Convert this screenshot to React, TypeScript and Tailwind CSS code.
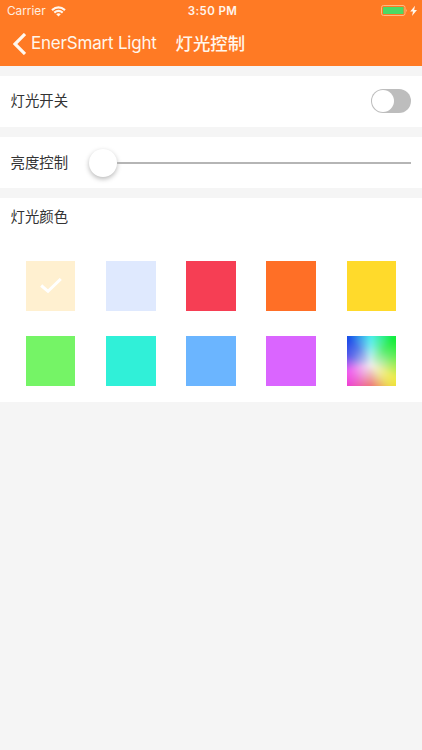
const swatches = [
  ["bg-[#fff0d0]", "bg-[#dfe9fe]", "bg-[#f63e54]", "bg-[#ff6f26]", "bg-[#ffda2b]"],
  ["bg-[#75f466]", "bg-[#30f0d8]", "bg-[#6bb5ff]", "bg-[#da65ff]", "spectrum"],
];

const latin = "font-['Inter','Liberation_Sans',sans-serif]";

function StatusBar() {
  return (
    <div className={`flex h-[22px] items-center text-white ${latin}`}>
      <div className="flex flex-1 items-center pl-[7px]">
        <span className="w-[39px] whitespace-nowrap text-[11.8px] leading-[22px] text-[#ffeee0]">Carrier</span>
        <svg className="ml-[5px]" width="15" height="11" viewBox="0 0 15 11" fill="none" stroke="#fff6ec" strokeWidth="2.2">
          <path d="M1 4.1Q7.5-1.5 14 4.1" />
          <path d="M3.3 6.7Q7.5 3.2 11.7 6.7" />
          <path d="M7.5 10.6L5.2 8.2Q7.5 6.5 9.8 8.2Z" fill="#fff6ec" stroke="none" />
        </svg>
      </div>
      <span className="text-[11.5px] font-semibold leading-[22px] tracking-[0.4px] text-[#fff5ec]">3:50 PM</span>
      <div className="flex flex-1 justify-end pr-[4px]">
        <svg width="37" height="12" viewBox="0 0 37 12">
          <rect x="0.5" y="0.5" width="23.5" height="10" rx="2" fill="none" stroke="#ffba80" />
          <rect x="2" y="2" width="20.5" height="7" rx="0.5" fill="#4cd964" />
          <path d="M25.2 4Q26.8 5.5 25.2 7.2Z" fill="#ffba80" />
          <path d="M34 0.8L29.2 6.4H32L31 11L36 5H33.2Z" fill="#fff6ec" />
        </svg>
      </div>
    </div>
  );
}

function Spectrum() {
  return (
    <div className="h-[49.6px] w-[49.6px] overflow-hidden">
      <div className="-m-[6px] h-[62px] w-[62px] bg-[radial-gradient(circle_at_48%_56%,#eeeeee_0%,rgba(238,238,238,0.7)_18%,rgba(238,238,238,0.3)_42%,rgba(238,238,238,0)_72%),conic-gradient(from_0deg_at_48%_56%,#35efef_0deg,#10ed35_42deg,#35ed35_65deg,#f0ec30_118deg,#edda35_138deg,#ef4b4b_180deg,#ee35ce_227deg,#f235f2_255deg,#2835e8_294deg,#184ae8_320deg,#35efef_360deg)] blur-[2px]" />
    </div>
  );
}

export default function App() {
  return (
    <main className="h-[750px] w-[422px] overflow-hidden bg-[#f5f5f5] font-['Noto_Sans_CJK_SC',sans-serif] text-[#333333]">
      <header className="h-[65.5px] bg-[#ff7a24]">
        <StatusBar />
        <div className="flex h-[43px] items-center pl-[13px] text-[#fff6ec]">
          <svg className="shrink-0" width="13" height="22" viewBox="0 0 13 22" fill="none" stroke="#fff8ef" strokeWidth="3.2">
            <path d="M12 1L2 11L12 21" />
          </svg>
          <span className={`ml-[5px] w-[144.5px] whitespace-nowrap text-[17px] tracking-[-0.2px] ${latin}`}>EnerSmart Light</span>
          <h1 className="mb-[2px] text-[17.4px] font-medium leading-[26px]">灯光控制</h1>
        </div>
      </header>

      <section className="mt-[10px] flex h-[51px] items-center justify-between bg-white px-[11px]">
        <span className="-ml-[0.5px] mb-[2px] text-[14.4px]">灯光开关</span>
        <div className="flex h-[24px] w-[40.5px] items-center rounded-full bg-[#bdbdbd] pl-px">
          <div className="h-[22.5px] w-[22.5px] rounded-full bg-white" />
        </div>
      </section>

      <section className="mt-[10.5px] flex h-[51px] items-center bg-white px-[11px]">
        <span className="-ml-[0.5px] mb-[2px] w-[78.5px] text-[14.4px]">亮度控制</span>
        <div className="flex flex-1 items-center">
          <div className="h-[28px] w-[28px] shrink-0 rounded-full bg-white shadow-[0_2px_5px_rgba(0,0,0,0.28)]" />
          <div className="h-[2px] flex-1 bg-[#b5b5b5]" />
        </div>
      </section>

      <section className="mt-[10px] h-[203.5px] bg-white">
        <h2 className="h-[63px] px-[10.5px] pt-[7px] text-[14.4px] leading-[22px]">灯光颜色</h2>
        <div className="flex flex-col gap-[25.4px] pl-[25.8px]">
          {swatches.map((row, i) => (
            <div key={i} className="flex gap-[30.6px]">
              {row.map((color) =>
                color === "spectrum" ? (
                  <Spectrum key={color} />
                ) : (
                  <div key={color} className={`flex h-[49.6px] w-[49.6px] items-center justify-center ${color}`}>
                    {color === "bg-[#fff0d0]" && (
                      <svg width="22" height="16" viewBox="0 0 22 16" fill="none" stroke="white" strokeWidth="3">
                        <path d="M1.2 7.5L8 13.3L20.8 1" />
                      </svg>
                    )}
                  </div>
                ),
              )}
            </div>
          ))}
        </div>
      </section>
    </main>
  );
}
